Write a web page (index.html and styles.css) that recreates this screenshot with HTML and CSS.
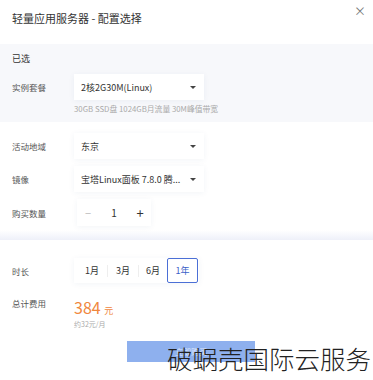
FILE: index.html
```html
<!DOCTYPE html>
<html>
<head>
    <meta charset="utf-8">
    <title>配置选择</title>
    <link rel="stylesheet" href="styles.css">
</head>
<body>
<div class="dialog">
    <div class="dialog-header">
        <h1>轻量应用服务器 - 配置选择</h1>
        <span class="close">&times;</span>
    </div>
    <div class="selected">
        <div class="selected-title">已选</div>
        <div class="row">
            <span class="label">实例套餐</span>
            <div class="select">2核2G30M(Linux)<span class="caret"></span></div>
        </div>
        <div class="hint">30GB SSD盘 1024GB月流量 30M峰值带宽</div>
    </div>
    <div class="options">
        <div class="row">
            <span class="label">活动地域</span>
            <div class="select">东京<span class="caret"></span></div>
        </div>
        <div class="row">
            <span class="label">镜像</span>
            <div class="select">宝塔Linux面板 7.8.0 腾...<span class="caret"></span></div>
        </div>
        <div class="row">
            <span class="label">购买数量</span>
            <div class="stepper">
                <span class="step minus">&minus;</span>
                <span class="count">1</span>
                <span class="step plus">+</span>
            </div>
        </div>
    </div>
    <div class="divider"></div>
    <div class="summary">
        <div class="row">
            <span class="label">时长</span>
            <div class="periods">
                <span class="period">1月</span>
                <span class="period">3月</span>
                <span class="period">6月</span>
                <span class="period active">1年</span>
            </div>
        </div>
        <div class="row price-row">
            <span class="label">总计费用</span>
            <div class="price">
                <div><span class="amount">384</span> <span class="unit">元</span></div>
                <div class="monthly">约32元/月</div>
            </div>
        </div>
    </div>
    <div class="footer">
        <button class="buy-btn">立即购买</button>
    </div>
    <div class="watermark">破蜗壳国际云服务</div>
</div>
</body>
</html>
```
FILE: styles.css
```css
body {
    margin: 0;
    font-family: "Noto Sans CJK SC", "Noto Sans", sans-serif;
    background: #fff;
    color: #333;
}
.dialog {
    position: relative;
    width: 373px;
    height: 380px;
    overflow: hidden;
}
.dialog-header {
    height: 44px;
    display: flex;
    justify-content: space-between;
    padding: 0 7px 0 12px;
}
.dialog-header h1 {
    margin: 10px 0 0;
    font-size: 11px;
    font-weight: normal;
    color: #333;
    line-height: 16px;
}
.close {
    font-size: 12px;
    color: #777;
    line-height: 14px;
    margin-top: 4px;
}
.selected {
    background: #f7f8fb;
    padding: 8px 12px 6px;
    height: 64px;
}
.selected-title {
    font-size: 9px;
    line-height: 14px;
    margin-bottom: 8px;
}
.row {
    display: flex;
    align-items: center;
}
.label {
    width: 62px;
    font-size: 8.5px;
    color: #555;
    white-space: nowrap;
}
.select {
    width: 115px;
    height: 26px;
    background: #fff;
    box-shadow: 0 1px 6px rgba(40, 60, 120, 0.06);
    display: flex;
    align-items: center;
    justify-content: space-between;
    padding: 0 8px 0 7px;
    font-size: 9px;
    color: #333;
    white-space: nowrap;
}
.caret {
    flex: none;
    width: 0;
    height: 0;
    border-left: 3px solid transparent;
    border-right: 3px solid transparent;
    border-top: 3px solid #444;
}
.hint {
    margin: 4px 0 0 62px;
    font-size: 7.8px;
    color: #aaa;
    line-height: 10px;
    white-space: nowrap;
}
.options {
    padding: 11px 12px 0;
    height: 97px;
    display: flex;
    flex-direction: column;
    gap: 7px;
}
.stepper {
    width: 74px;
    height: 27px;
    margin-left: 3px;
    display: flex;
    align-items: center;
    justify-content: space-between;
    box-shadow: 0 1px 6px rgba(40, 60, 120, 0.06);
    font-size: 11px;
}
.step {
    width: 22px;
    text-align: center;
}
.minus {
    color: #bbb;
}
.plus {
    color: #333;
    font-size: 13px;
}
.count {
    font-size: 10px;
}
.divider {
    height: 10px;
    background: linear-gradient(#fff, #eef0f9);
}
.summary {
    padding: 18px 12px 0;
}
.periods {
    display: flex;
    align-items: center;
    height: 25px;
    box-shadow: 0 1px 6px rgba(40, 60, 120, 0.06);
    padding: 0 1px 0 3px;
}
.period {
    width: 30px;
    text-align: center;
    font-size: 9px;
    color: #333;
    line-height: 12px;
    border-right: 1px solid #eee;
}
.period:nth-child(3) {
    border-right: none;
    width: 28px;
}
.period.active {
    width: 29px;
    height: 23px;
    line-height: 23px;
    border: 1px solid #4b6fd6;
    border-radius: 2px;
    color: #3b5fc8;
}
.price-row {
    margin-top: 12px;
    align-items: flex-start;
}
.price-row .label {
    margin-top: 2px;
}
.amount {
    font-size: 16px;
    color: #f0873d;
    line-height: 18px;
}
.unit {
    font-size: 9px;
    color: #f0873d;
}
.monthly {
    font-size: 7px;
    color: #aaa;
    line-height: 10px;
}
.footer {
    padding: 12px 0 0 127px;
}
.buy-btn {
    display: block;
    width: 128px;
    height: 21px;
    border: none;
    background: #8eb0ee;
    color: #dfe8fb;
    font-size: 8px;
    font-family: inherit;
}
.watermark {
    position: absolute;
    left: 167px;
    top: 341px;
    font-size: 25.5px;
    font-weight: 300;
    color: #222;
    line-height: 34px;
}
```
